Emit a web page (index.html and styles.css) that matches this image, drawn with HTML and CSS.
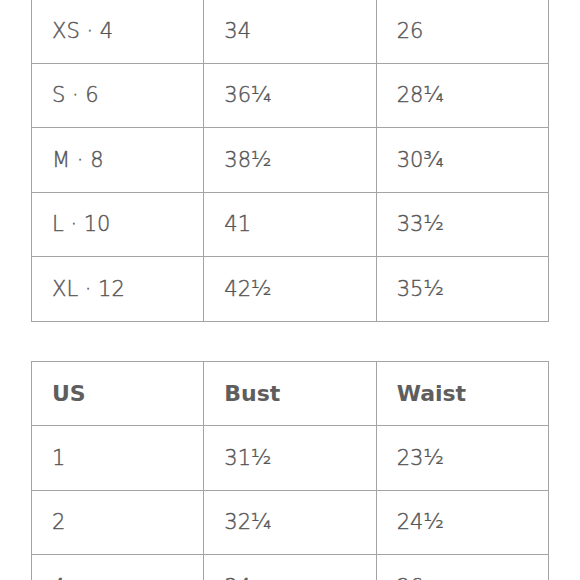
FILE: index.html
```html
<!DOCTYPE html>
<html lang="en">
<head>
<meta charset="utf-8">
<title>Size chart</title>
<link rel="stylesheet" href="styles.css">
</head>
<body>
<div class="page">
  <table class="chart chart-first">
    <tbody>
      <tr><td>XS · 4</td><td>34</td><td>26</td></tr>
      <tr><td>S · 6</td><td>36¼</td><td>28¼</td></tr>
      <tr><td>M · 8</td><td>38½</td><td>30¾</td></tr>
      <tr><td>L · 10</td><td>41</td><td>33½</td></tr>
      <tr><td>XL · 12</td><td>42½</td><td>35½</td></tr>
    </tbody>
  </table>
  <table class="chart chart-second">
    <thead>
      <tr><th>US</th><th>Bust</th><th>Waist</th></tr>
    </thead>
    <tbody>
      <tr><td>1</td><td>31½</td><td>23½</td></tr>
      <tr><td>2</td><td>32¼</td><td>24½</td></tr>
      <tr><td>4</td><td>34</td><td>26</td></tr>
    </tbody>
  </table>
</div>
</body>
</html>
```
FILE: styles.css
```css
html, body {
  margin: 0;
  padding: 0;
  background: #ffffff;
}
body {
  font-family: "DejaVu Sans", "Open Sans", sans-serif;
  color: #5a5a5a;
  overflow: hidden;
}
.page {
  padding-left: 31px;
  width: 518px;
}
.chart {
  width: 518px;
  border-collapse: collapse;
  table-layout: fixed;
}
.chart-first {
  margin-top: -2px;
}
.chart-second {
  margin-top: 39px;
}
.chart tr {
  height: 64.5px;
}
.chart td,
.chart th {
  border: 1px solid #a4a4a4;
  padding: 0 0 0 20px;
  text-align: left;
  vertical-align: middle;
  font-size: 21px;
  font-weight: 200;
  color: #555555;
  -webkit-text-stroke: 0.4px #555555;
  white-space: nowrap;
}
.chart th {
  font-size: 22px;
  font-weight: 700;
  color: #5e5e5e;
  -webkit-text-stroke: 0;
}
```
